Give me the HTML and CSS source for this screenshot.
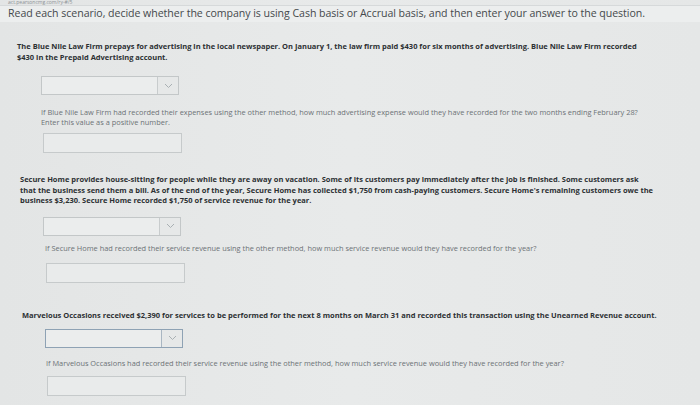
FILE: index.html
```html
<!DOCTYPE html>
<html>
<head>
<meta charset="utf-8">
<link rel="stylesheet" href="styles.css">
</head>
<body>
<div class="page">
  <div class="url">act.pearsoncmg.com/ry-#/5</div>
  <div class="title">Read each scenario, decide whether the company is using Cash basis or Accrual basis, and then enter your answer to the question.</div>

  <section class="scenario s1">
    <p class="lead">The Blue Nile Law Firm prepays for advertising in the local newspaper. On January 1, the law firm paid $430 for six months of advertising. Blue Nile Law Firm recorded<br>$430 in the Prepaid Advertising account.</p>
    <div class="answers a1">
      <div class="select"><span class="field"></span><span class="arrow"><svg width="9" height="6" viewBox="0 0 9 6"><path d="M1 1 L4.5 4.5 L8 1" fill="none" stroke="#a9b0b3" stroke-width="1"/></svg></span></div>
      <p class="question">If Blue Nile Law Firm had recorded their expenses using the other method, how much advertising expense would they have recorded for the two months ending February 28?<br>Enter this value as a positive number.</p>
      <div class="input"></div>
    </div>
  </section>

  <section class="scenario s2">
    <p class="lead">Secure Home provides house-sitting for people while they are away on vacation. Some of its customers pay immediately after the job is finished. Some customers ask<br>that the business send them a bill. As of the end of the year, Secure Home has collected $1,750 from cash-paying customers. Secure Home's remaining customers owe the<br>business $3,230. Secure Home recorded $1,750 of service revenue for the year.</p>
    <div class="answers a2">
      <div class="select"><span class="field"></span><span class="arrow"><svg width="9" height="6" viewBox="0 0 9 6"><path d="M1 1 L4.5 4.5 L8 1" fill="none" stroke="#a9b0b3" stroke-width="1"/></svg></span></div>
      <p class="question">If Secure Home had recorded their service revenue using the other method, how much service revenue would they have recorded for the year?</p>
      <div class="input"></div>
    </div>
  </section>

  <section class="scenario s3">
    <p class="lead">Marvelous Occasions received $2,390 for services to be performed for the next 8 months on March 31 and recorded this transaction using the Unearned Revenue account.</p>
    <div class="answers a3">
      <div class="select focus"><span class="field"></span><span class="arrow"><svg width="9" height="6" viewBox="0 0 9 6"><path d="M1 1 L4.5 4.5 L8 1" fill="none" stroke="#a9b0b3" stroke-width="1"/></svg></span></div>
      <p class="question">If Marvelous Occasions had recorded their service revenue using the other method, how much service revenue would they have recorded for the year?</p>
      <div class="input"></div>
    </div>
  </section>
</div>
</body>
</html>
```

FILE: styles.css
```css
html, body {
  margin: 0;
  padding: 0;
}
body {
  width: 700px;
  height: 405px;
  overflow: hidden;
  background: linear-gradient(90deg, #e3e5e5 0%, #e8eaea 50%, #e5e7e7 100%);
  font-family: "Open Sans", "Liberation Sans", sans-serif;
  color: #3a3d40;
}
.page {
  display: flex;
  flex-direction: column;
}
.url {
  font-size: 5px;
  line-height: 5px;
  color: #8c9296;
  padding: 0 0 0 8px;
  height: 5px;
  border-bottom: 1px solid #d6d9da;
}
.title {
  font-size: 10.6px;
  line-height: 14px;
  color: #45494c;
  padding: 0 0 0 8px;
  height: 16px;
  background: #eceeee;
  letter-spacing: -0.05px;
}
.scenario {
  display: flex;
  flex-direction: column;
}
.lead {
  margin: 0;
  font-weight: 700;
  font-size: 7.5px;
  line-height: 10.6px;
  color: #2c3033;
}
.answers {
  display: flex;
  flex-direction: column;
}
.question {
  margin: 0;
  font-size: 7.4px;
  line-height: 10px;
  color: #6c7276;
}
.select {
  display: flex;
  width: 136px;
  height: 17px;
  border: 1px solid #c3c7c8;
  background: #ebeded;
}
.select .field {
  flex: 1;
}
.select .arrow {
  width: 20px;
  border-left: 1px solid #c8cccd;
  display: flex;
  align-items: center;
  justify-content: center;
  background: #e6e8e8;
}
.select.focus {
  border-color: #8ea2b4;
}
.select.focus .arrow {
  border-left-color: #a9b6c2;
}
.input {
  width: 137px;
  height: 18px;
  border: 1px solid #c6cacb;
  background: #e9ebeb;
}

/* scenario 1 */
.s1 { padding: 19px 0 0 17px; }
.a1 { padding: 14px 0 0 24px; }
.a1 .question { margin: 12px 0 0 0; }
.a1 .input { margin: 6px 0 0 2px; }

/* scenario 2 */
.s2 { padding: 21px 0 0 20px; }
.a2 { padding: 11px 0 0 23px; }
.a2 .question { margin: 7px 0 0 2px; }
.a2 .input { margin: 10px 0 0 3px; }

/* scenario 3 */
.s3 { padding: 27px 0 0 22px; }
.a3 { padding: 8px 0 0 23px; }
.a3 .question { margin: 10px 0 0 1px; }
.a3 .input { margin: 8px 0 0 2px; }
```
